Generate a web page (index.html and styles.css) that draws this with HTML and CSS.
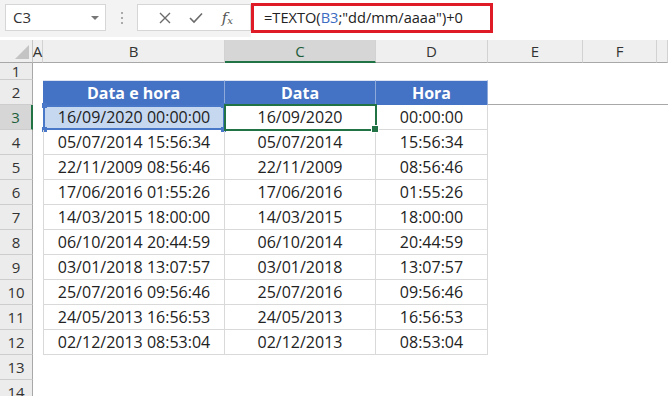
FILE: index.html
```html
<!DOCTYPE html>
<html lang="pt">
<head>
    <meta charset="UTF-8">
    <title>TEXTO - Data e hora</title>
    <link rel="stylesheet" href="styles.css">
</head>
<body>
    <!-- Formula bar -->
    <div class="toolbar">
        <div class="name-box">C3<span class="caret"></span></div>
        <div class="grip"><i></i><i></i><i></i></div>
        <div class="fx-buttons">
            <svg width="12" height="12" viewBox="0 0 12 12"><path d="M1 1 L11 11 M11 1 L1 11" stroke="#6b6b6b" stroke-width="1.4" fill="none"/></svg>
            <svg width="14" height="12" viewBox="0 0 14 12"><path d="M1 6 L5 10 L13 1.5" stroke="#6b6b6b" stroke-width="1.6" fill="none"/></svg>
            <span class="fx">f<sub>x</sub></span>
        </div>
        <div class="formula">
            <div class="formula-input">=TEXTO(<span class="ref">B3</span>;"dd/mm/aaaa")+0</div>
        </div>
    </div>

    <!-- Sheet -->
    <div class="sheet" id="sheet"></div>

    <script>
        // last column (G) is only a sliver at the window edge, so no letter
        const letters = ['A', 'B', 'C', 'D', 'E', 'F', ''];
        const data = [
            ['16/09/2020 00:00:00', '16/09/2020', '00:00:00'],
            ['05/07/2014 15:56:34', '05/07/2014', '15:56:34'],
            ['22/11/2009 08:56:46', '22/11/2009', '08:56:46'],
            ['17/06/2016 01:55:26', '17/06/2016', '01:55:26'],
            ['14/03/2015 18:00:00', '14/03/2015', '18:00:00'],
            ['06/10/2014 20:44:59', '06/10/2014', '20:44:59'],
            ['03/01/2018 13:07:57', '03/01/2018', '13:07:57'],
            ['25/07/2016 09:56:46', '25/07/2016', '09:56:46'],
            ['24/05/2013 16:56:53', '24/05/2013', '16:56:53'],
            ['02/12/2013 08:53:04', '02/12/2013', '08:53:04']
        ];
        const headers = ['Data e hora', 'Data', 'Hora'];
        const sheet = document.getElementById('sheet');

        function addCell(className, text) {
            const cell = document.createElement('div');
            cell.className = 'cell ' + className;
            cell.textContent = text || '';
            sheet.appendChild(cell);
            return cell;
        }

        // column headers
        addCell('corner');
        letters.forEach(l => addCell('col-head' + (l === 'C' ? ' selected' : ''), l));

        for (let r = 1; r <= 14; r++) {
            addCell('row-head' + (r === 3 ? ' selected' : ''), r);
            letters.forEach((l, i) => {
                let cls = 'blank';
                let text = '';
                if (r === 2 && i >= 1 && i <= 3) {
                    cls = 'th';
                    text = headers[i - 1];
                } else if (r >= 3 && r <= 12 && i >= 1 && i <= 3) {
                    cls = 'td' + (i === 1 ? ' first' : '');
                    text = data[r - 3][i - 1];
                } else if (r === 2 && i > 3) {
                    cls = 'blank freeze';
                }
                const cell = addCell(cls, text);
                if (r === 3 && l === 'B') {
                    cell.classList.add('ref-cell');
                    cell.innerHTML += '<i class="knob tl"></i><i class="knob tr"></i><i class="knob bl"></i><i class="knob br"></i>';
                }
                if (r === 3 && l === 'C') {
                    cell.classList.add('active-cell');
                    cell.innerHTML += '<i class="fill-handle"></i>';
                }
            });
        }
    </script>
</body>
</html>
```

FILE: styles.css
```css
body {
    margin: 0;
    width: 668px;
    height: 396px;
    overflow: hidden;
    background: #fff;
    font-family: "Open Sans", "Noto Sans", sans-serif;
    color: #222;
}

.toolbar {
    display: flex;
    align-items: flex-start;
    height: 37px;
    background: #f3f3f3;
    margin-bottom: 3px;
}

.name-box {
    position: relative;
    box-sizing: border-box;
    width: 101px;
    height: 27px;
    margin: 4px 0 0 5px;
    padding-left: 7px;
    background: #fff;
    border: 1px solid #d6d6d6;
    font-size: 15px;
    line-height: 25px;
    color: #333;
}
.caret {
    position: absolute;
    right: 6px;
    top: 11px;
    border-left: 4px solid transparent;
    border-right: 4px solid transparent;
    border-top: 4px solid #777;
}

.grip {
    display: flex;
    flex-direction: column;
    gap: 3px;
    width: 2px;
    margin: 12px 14px 0 15px;
}
.grip i {
    width: 2px;
    height: 2px;
    background: #aaa;
}

.fx-buttons {
    box-sizing: border-box;
    display: flex;
    align-items: center;
    justify-content: space-around;
    width: 114px;
    height: 27px;
    margin-top: 4px;
    padding: 0 8px 0 12px;
    background: #fff;
    border: 1px solid #d6d6d6;
}
.fx {
    font-family: "DejaVu Serif", serif;
    font-style: italic;
    font-size: 15px;
    color: #555;
}
.fx sub {
    font-size: 10px;
    vertical-align: -1px;
}

.formula {
    flex: 1;
    height: 37px;
    background: #fff;
}
.formula-input {
    box-sizing: border-box;
    width: 242px;
    height: 30px;
    margin-top: 3px;
    padding-left: 10px;
    border: 3px solid #e01b28;
    font-size: 14.6px;
    line-height: 23px;
    color: #222;
}
.ref {
    color: #3b6cc2;
}

.sheet {
    display: grid;
    grid-template-columns: 33px 10px 182px 151px 112px 95px 74px 11px;
    grid-template-rows: 23px 17px repeat(13, 25px);
}

.cell {
    box-sizing: border-box;
    position: relative;
    display: flex;
    align-items: center;
    justify-content: center;
    font-size: 16px;
    white-space: nowrap;
    overflow: visible;
}

.corner {
    background: #efefef;
    border-right: 1px solid #c6c6c6;
    border-bottom: 1px solid #a8a8a8;
}
.corner::after {
    content: "";
    position: absolute;
    right: 3px;
    bottom: 3px;
    border-left: 14px solid transparent;
    border-bottom: 14px solid #c4c4c4;
}

.col-head {
    background: #efefef;
    border-right: 1px solid #d2d2d2;
    border-bottom: 1px solid #a8a8a8;
    font-size: 15px;
    color: #333;
}
.col-head.selected {
    background: #d6d6d6;
    border-bottom: 2px solid #217346;
    color: #1d5e3a;
}

.row-head {
    background: #ececec;
    border-right: 1px solid #a8a8a8;
    border-bottom: 1px solid #cdcdcd;
    font-size: 15px;
    color: #333;
}
.row-head.selected {
    background: #d6d6d6;
    border-right: 2px solid #217346;
    color: #1d5e3a;
}

.th {
    background: #4472c4;
    color: #fff;
    font-weight: bold;
    border-right: 1px solid #8eaadb;
    border-top: 1px solid #dbe3f3;
}

.td {
    border-right: 1px solid #d9d9d9;
    border-bottom: 1px solid #d9d9d9;
}
.td.first {
    border-left: 1px solid #d9d9d9;
}

.freeze {
    border-bottom: 1px solid #a8a8a8;
}

.ref-cell {
    background: #c5d8f0;
    outline: 2px solid #4a78c8;
    outline-offset: -2px;
}
.knob {
    position: absolute;
    width: 5px;
    height: 5px;
    background: #4a78c8;
}
.knob.tl { left: -2px; top: -2px; }
.knob.tr { right: -2px; top: -2px; }
.knob.bl { left: -2px; bottom: -3px; }
.knob.br { right: -2px; bottom: -3px; }

.active-cell {
    outline: 2px solid #217346;
    outline-offset: -1px;
    z-index: 1;
}
.fill-handle {
    position: absolute;
    right: -4px;
    bottom: -4px;
    width: 6px;
    height: 6px;
    background: #217346;
    border: 1px solid #fff;
}
```
